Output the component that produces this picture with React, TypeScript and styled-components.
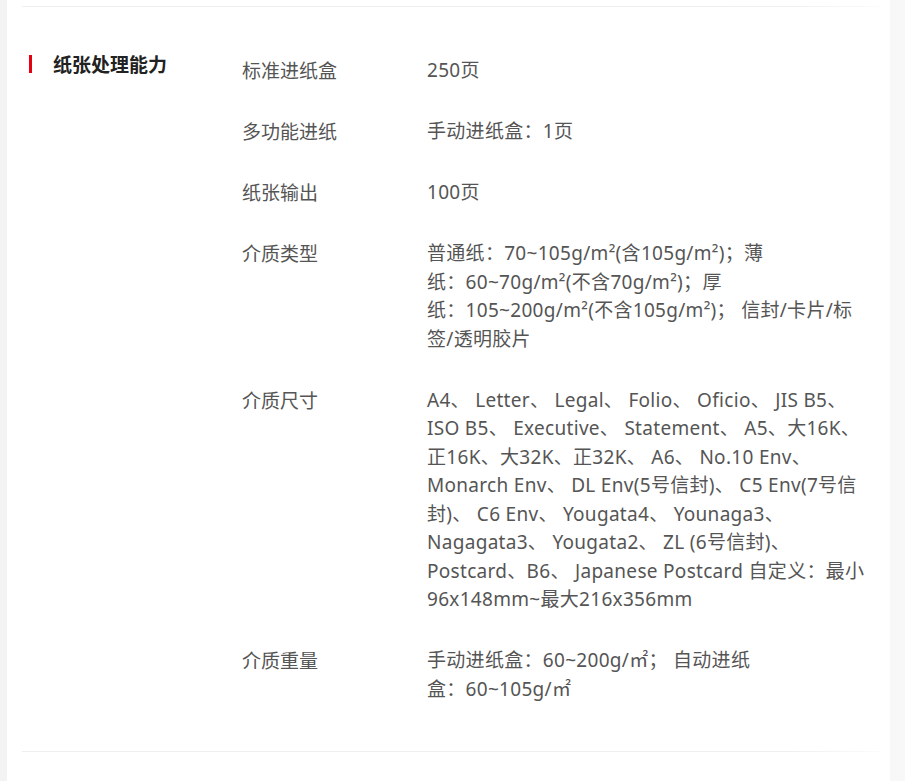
import React from "react";
import styled, { createGlobalStyle } from "styled-components";

const GlobalStyle = createGlobalStyle`
  html, body { margin: 0; padding: 0; background: #ffffff; }
  body {
    font-family: "Noto Sans", "Noto Sans CJK SC", sans-serif;
    -webkit-font-smoothing: antialiased;
  }
`;

const Page = styled.div`
  display: flex;
  width: 915px;
  height: 781px;
  background: #ffffff;
  overflow: hidden;
`;

const Frame = styled.div`
  display: flex;
  background: linear-gradient(to right, #f3f3f3, #f8f8f8);
  padding: 0 15px 0 7px;
  width: 905px;
  box-sizing: border-box;
`;

const Card = styled.div`
  flex: 1;
  background: #ffffff;
  display: flex;
  flex-direction: column;
  padding: 6px 10px 0 15px;
`;

const Divider = styled.div`
  height: 1px;
  background: linear-gradient(to right, #efefef 0%, #f0f0f0 90%, #fbfbfb 100%);
`;

const Section = styled.section`
  display: grid;
  grid-template-columns: 213px 185px 1fr;
  padding: 43px 0 48px 7px;
`;

const TitleCell = styled.div`
  display: flex;
  align-items: flex-start;
  gap: 21px;
`;

const RedBar = styled.span`
  width: 3px;
  height: 18px;
  margin-top: 5px;
  background: #e60012;
  flex-shrink: 0;
`;

const Title = styled.h3`
  margin: 0;
  font-size: 19px;
  line-height: 28px;
  font-weight: 700;
  color: #222222;
  font-family: "Noto Sans CJK SC", sans-serif;
`;

const Specs = styled.dl`
  grid-column: 2 / span 2;
  display: grid;
  grid-template-columns: 185px 1fr;
  row-gap: 32.5px;
  margin: 0;
  padding-top: 6px;
`;

const Label = styled.dt`
  margin: 0;
  font-size: 19px;
  line-height: 28.5px;
  color: #555555;
  font-family: "Noto Sans CJK SC", sans-serif;
`;

const Value = styled.dd`
  margin: 0;
  font-size: 19px;
  line-height: 28.5px;
  letter-spacing: 0.3px;
  color: #555555;
  white-space: nowrap;
`;

const rows: { label: string; lines: string[] }[] = [
  { label: "标准进纸盒", lines: ["250页"] },
  { label: "多功能进纸", lines: ["手动进纸盒：1页"] },
  { label: "纸张输出", lines: ["100页"] },
  {
    label: "介质类型",
    lines: [
      "普通纸：70~105g/m²(含105g/m²)；薄",
      "纸：60~70g/m²(不含70g/m²)；厚",
      "纸：105~200g/m²(不含105g/m²)； 信封/卡片/标",
      "签/透明胶片",
    ],
  },
  {
    label: "介质尺寸",
    lines: [
      "A4、 Letter、 Legal、 Folio、 Oficio、 JIS B5、",
      "ISO B5、 Executive、 Statement、 A5、大16K、",
      "正16K、大32K、正32K、 A6、 No.10 Env、",
      "Monarch Env、 DL Env(5号信封)、 C5 Env(7号信",
      "封)、 C6 Env、 Yougata4、 Younaga3、",
      "Nagagata3、 Yougata2、 ZL (6号信封)、",
      "Postcard、B6、 Japanese Postcard 自定义：最小",
      "96x148mm~最大216x356mm",
    ],
  },
  {
    label: "介质重量",
    lines: ["手动进纸盒：60~200g/㎡； 自动进纸", "盒：60~105g/㎡"],
  },
];

export default function App() {
  return (
    <>
      <GlobalStyle />
      <Page>
        <Frame>
          <Card>
            <Divider />
            <Section>
              <TitleCell>
                <RedBar />
                <Title>纸张处理能力</Title>
              </TitleCell>
              <Specs>
                {rows.map((r) => (
                  <React.Fragment key={r.label}>
                    <Label>{r.label}</Label>
                    <Value>
                      {r.lines.map((l, i) => (
                        <React.Fragment key={i}>
                          {i > 0 && <br />}
                          {l}
                        </React.Fragment>
                      ))}
                    </Value>
                  </React.Fragment>
                ))}
              </Specs>
            </Section>
            <Divider />
          </Card>
        </Frame>
      </Page>
    </>
  );
}
